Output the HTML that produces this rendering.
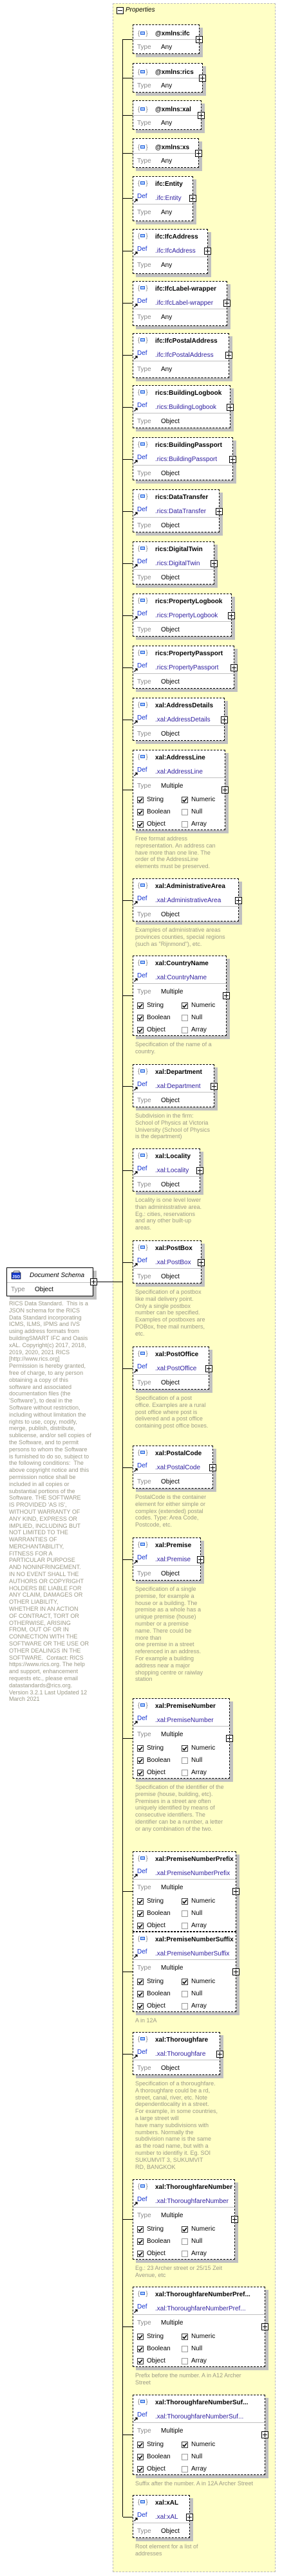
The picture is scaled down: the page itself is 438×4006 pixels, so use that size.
<!DOCTYPE html>
<html><head><meta charset="utf-8">
<style>
*{margin:0;padding:0;box-sizing:border-box}
body{width:438px;height:4006px;background:#fff;position:relative;font-family:"Liberation Sans",sans-serif;overflow:hidden}
.a{position:absolute}
#panel{left:175px;top:5px;width:253px;height:3995px;background:#ffffc6;border:1px dashed #bbb}
.box{position:absolute;background:#fff;border:1px dashed #000;box-shadow:5px 5px 0 #c0c0c0}
.nm{position:absolute;left:34px;font-weight:bold;font-size:10px;color:#000;white-space:nowrap;line-height:12px}
.lb{position:absolute;font-size:10px;line-height:12px;white-space:nowrap}
.sep{position:absolute;left:0;right:0;height:1px;background:#c0c0c0}
.plus{position:absolute;width:11px;height:11px;background:#fff;border:1px solid #000}
.plus:before{content:"";position:absolute;left:1px;top:4px;width:7px;height:1px;background:#000}
.plus:after{content:"";position:absolute;left:4px;top:1px;width:1px;height:7px;background:#000}
.cb{position:absolute;width:10px;height:10px;border:1px solid #555;background:#fff}
.desc{position:absolute;font-size:9px;line-height:10.8px;color:#9c9a88;white-space:nowrap}
.ic{position:absolute;left:7px;top:5px;font-size:10px;color:#888;line-height:12px}
.ic i{display:inline-block;width:7px;height:5px;border:1px solid #1f5fd6;background:#a9c8ff;vertical-align:1px;margin:0 1px}
</style></head><body>
<div id="panel" class="a"></div>
<div class="a" style="left:181px;top:11px;width:11px;height:11px;border:1px solid #000;background:#fff"><div class="a" style="left:1px;top:4px;width:7px;height:1px;background:#000"></div></div>
<div class="a" style="left:195px;top:10px;font-size:10px;font-style:italic;line-height:12px">Properties</div>
<div class="a" style="left:190px;top:61px;width:1px;height:3853px;background:#000"></div>

<!-- Document Schema -->
<div class="box" style="left:10px;top:1971px;width:135px;height:45px;border:1px solid #000">
 <svg class="a" style="left:6px;top:4px" width="16" height="14" viewBox="0 0 16 14"><rect x="1" y="3" width="14" height="10" fill="#1b3fd1" stroke="#000" stroke-width="0.6"/><path d="M3 3 L5 0.5 L13 0.5 L13 3" fill="#ddd" stroke="#000" stroke-width="0.6"/><text x="2" y="11.5" font-size="6" fill="#fff" font-family="Liberation Sans" font-weight="bold">JSO</text></svg>
 <div class="lb" style="left:35px;top:6px;font-style:italic;font-size:10px">Document Schema</div>
 <div class="sep" style="top:22px"></div>
 <div class="lb" style="left:6px;top:28px;color:#888">Type</div>
 <div class="lb" style="left:43px;top:28px">Object</div>
 <div class="plus" style="left:129px;top:16px"></div>
</div>
<div class="a" style="left:150px;top:1993px;width:40px;height:1px;background:#000"></div>
<div class="desc" style="left:14px;top:2022px">RICS Data Standard.&nbsp; This is a<br>JSON schema for the RICS<br>Data Standard incorporating<br>ICMS, ILMS, IPMS and IVS<br>using address formats from<br>buildingSMART IFC and Oasis<br>xAL. Copyright(c) 2017, 2018,<br>2019, 2020, 2021 RICS<br>[http://www.rics.org]<br>Permission is hereby granted,<br>free of charge, to any person<br>obtaining a copy of this<br>software and associated<br>documentation files (the<br>'Software'), to deal in the<br>Software without restriction,<br>including without limitation the<br>rights to use, copy, modify,<br>merge, publish, distribute,<br>sublicense, and/or sell copies of<br>the Software, and to permit<br>persons to whom the Software<br>is furnished to do so, subject to<br>the following conditions:&nbsp; The<br>above copyright notice and this<br>permission notice shall be<br>included in all copies or<br>substantial portions of the<br>Software. THE SOFTWARE<br>IS PROVIDED 'AS IS',<br>WITHOUT WARRANTY OF<br>ANY KIND, EXPRESS OR<br>IMPLIED, INCLUDING BUT<br>NOT LIMITED TO THE<br>WARRANTIES OF<br>MERCHANTABILITY,<br>FITNESS FOR A<br>PARTICULAR PURPOSE<br>AND NONINFRINGEMENT.<br>IN NO EVENT SHALL THE<br>AUTHORS OR COPYRIGHT<br>HOLDERS BE LIABLE FOR<br>ANY CLAIM, DAMAGES OR<br>OTHER LIABILITY,<br>WHETHER IN AN ACTION<br>OF CONTRACT, TORT OR<br>OTHERWISE, ARISING<br>FROM, OUT OF OR IN<br>CONNECTION WITH THE<br>SOFTWARE OR THE USE OR<br>OTHER DEALINGS IN THE<br>SOFTWARE.&nbsp; Contact: RICS<br>https://www.rics.org. The help<br>and support, enhancement<br>requests etc., please email<br>datastandards@rics.org.<br>Version 3.2.1 Last Updated 12<br>March 2021</div>

<script>
var B=[
[38,310,"@xmlns:ifc",0,"Any",0],
[98,315,"@xmlns:rics",0,"Any",0],
[156,313,"@xmlns:xal",0,"Any",0],
[215,309,"@xmlns:xs",0,"Any",0],
[274,300,"ifc:Entity",1,"Any",0],
[356,323,"ifc:IfcAddress",1,"Any",0],
[437,353,"ifc:IfcLabel-wrapper",1,"Any",0],
[518,356,"ifc:IfcPostalAddress",1,"Any",0],
[599,358,"rics:BuildingLogbook",1,"Object",0],
[680,362,"rics:BuildingPassport",1,"Object",0],
[761,341,"rics:DataTransfer",1,"Object",0],
[842,333,"rics:DigitalTwin",1,"Object",0],
[923,360,"rics:PropertyLogbook",1,"Object",0],
[1004,364,"rics:PropertyPassport",1,"Object",0],
[1085,349,"xal:AddressDetails",1,"Object",0],
[1166,350,"xal:AddressLine",1,"Multiple",1,["Free format address","representation. An address can","have more than one line. The","order of the AddressLine","elements must be preserved."]],
[1366,371,"xal:AdministrativeArea",1,"Object",0,["Examples of administrative areas","provinces counties, special regions","(such as \"Rijnmond\"), etc."]],
[1486,352,"xal:CountryName",1,"Multiple",1,["Specification of the name of a","country."]],
[1655,333,"xal:Department",1,"Object",0,["Subdivision in the firm:","School of Physics at Victoria","University (School of Physics","is the department)"]],
[1786,311,"xal:Locality",1,"Object",0,["Locality is one level lower","than adminisstrative area.","Eg.: cities, reservations","and any other built-up","areas."]],
[1929,313,"xal:PostBox",1,"Object",0,["Specification of a postbox","like mail delivery point.","Only a single postbox","number can be specified.","Examples of postboxes are","POBox, free mail numbers,","etc."]],
[2094,325,"xal:PostOffice",1,"Object",0,["Specification of a post","office. Examples are a rural","post office where post is","delivered and a post office","containing post office boxes."]],
[2248,331,"xal:PostalCode",1,"Object",0,["PostalCode is the container","element for either simple or","complex (extended) postal","codes. Type: Area Code,","Postcode, etc."]],
[2391,312,"xal:Premise",1,"Object",0,["Specification of a single","premise, for example a","house or a building. The","premise as a whole has a","unique premise (house)","number or a premise","name.  There could be","more than","one premise in a street","referenced in an address.","For example a building","address near a major","shopping centre or raiwlay","station"]],
[2641,357,"xal:PremiseNumber",1,"Multiple",1,["Specification of the identifier of the","premise (house, building, etc).","Premises in a street are often","uniquely identified by means of","consecutive identifiers. The","identifier can be a number, a letter","or any combination of the two."]],
[2879,367,"xal:PremiseNumberPrefix",1,"Multiple",1],
[3004,367,"xal:PremiseNumberSuffix",1,"Multiple",1,["A in 12A"]],
[3160,342,"xal:Thoroughfare",1,"Object",0,["Specification of a thoroughfare.","A thoroughfare could be a rd,","street, canal, river, etc.  Note","dependentlocality in a street.","For example, in some countries,","a large street will","have many subdivisions with","numbers. Normally the","subdivision name is the same","as the road name, but with a","number to identifiy it. Eg. SOI","SUKUMVIT 3, SUKUMVIT","RD, BANGKOK"]],
[3389,365,"xal:ThoroughfareNumber",1,"Multiple",1,["Eg.: 23 Archer street or 25/15 Zeit","Avenue, etc"]],
[3556,412,"xal:ThoroughfareNumberPref...",1,"Multiple",1,["Prefix before the number. A in A12 Archer","Street"]],
[3724,412,"xal:ThoroughfareNumberSuf...",1,"Multiple",1,["Suffix after the number. A in 12A Archer Street"]],
[3880,295,"xal:xAL",1,"Object",0,["Root element for a list of","addresses"]]
];
var h="";
B.forEach(function(b){
 var y=b[0],w=b[1]-206,nm=b[2],df=b[3],ty=b[4],mu=b[5],ds=b[6];
 var H=df?(mu?125:67):46, cy=df?(mu?62:34):23;
 if(nm.indexOf("ifc:")==0&&nm.indexOf("@")<0) H=70;
 h+='<div class="a" style="left:191px;top:'+(y+cy)+'px;width:15px;height:1px;background:#000"></div>';
 h+='<div class="box" style="left:206px;top:'+y+'px;width:'+w+'px;height:'+H+'px">';
 h+='<div class="ic" style="top:'+(df?5:8)+'px">{<i></i>}</div>';
 h+='<div class="nm" style="top:'+(df?6:8)+'px">'+nm+'</div>';
 var t;
 if(df){
  var dv="."+nm.replace("@","");
  h+='<svg class="a" style="left:1px;top:34px" width="6" height="6" viewBox="0 0 6 6"><path d="M0.5 5.5 L5 1 M2 1 H5 V4" stroke="#000" stroke-width="1.3" fill="none"/></svg>';
  h+='<div class="lb" style="left:6px;top:25px;color:#1030d0">Def</div>';
  h+='<div class="lb" style="left:34px;top:28px;color:#3020a0">'+dv+'</div>';
  h+='<div class="sep" style="top:42px"></div>';t=50;
 } else {h+='<div class="sep" style="top:22px"></div>';t=29;}
 h+='<div class="lb" style="left:6px;top:'+t+'px;color:#888">Type</div>';
 h+='<div class="lb" style="left:43px;top:'+t+'px;color:#000">'+ty+'</div>';
 if(mu){
  var L=[["String",1,"Numeric",1],["Boolean",1,"Null",0],["Object",1,"Array",0]];
  L.forEach(function(r,i){
   var yy=71+i*19;
   [[6,r[0],r[1]],[75,r[2],r[3]]].forEach(function(c){
    h+='<div class="cb" style="left:'+c[0]+'px;top:'+(yy+1)+'px;border-color:'+(c[2]?'#333':'#999')+'">'+(c[2]?'<svg class="a" style="left:0;top:0" width="8" height="8" viewBox="0 0 8 8"><path d="M1 4 L3 6.5 L7 1.5" stroke="#000" stroke-width="1.6" fill="none"/></svg>':'')+'</div>';
    h+='<div class="lb" style="left:'+(c[0]+15)+'px;top:'+yy+'px">'+c[1]+'</div>';
   });
  });
 }
 h+='<div class="plus" style="left:'+(w-7)+'px;top:'+(cy-6)+'px"></div>';
 h+='</div>';
 if(ds) h+='<div class="desc" style="left:210px;top:'+(y+H+8)+'px">'+ds.join("<br>").replace(/"/g,"&quot;")+'</div>';
});
document.body.insertAdjacentHTML("beforeend",h);
</script>
</body></html>
